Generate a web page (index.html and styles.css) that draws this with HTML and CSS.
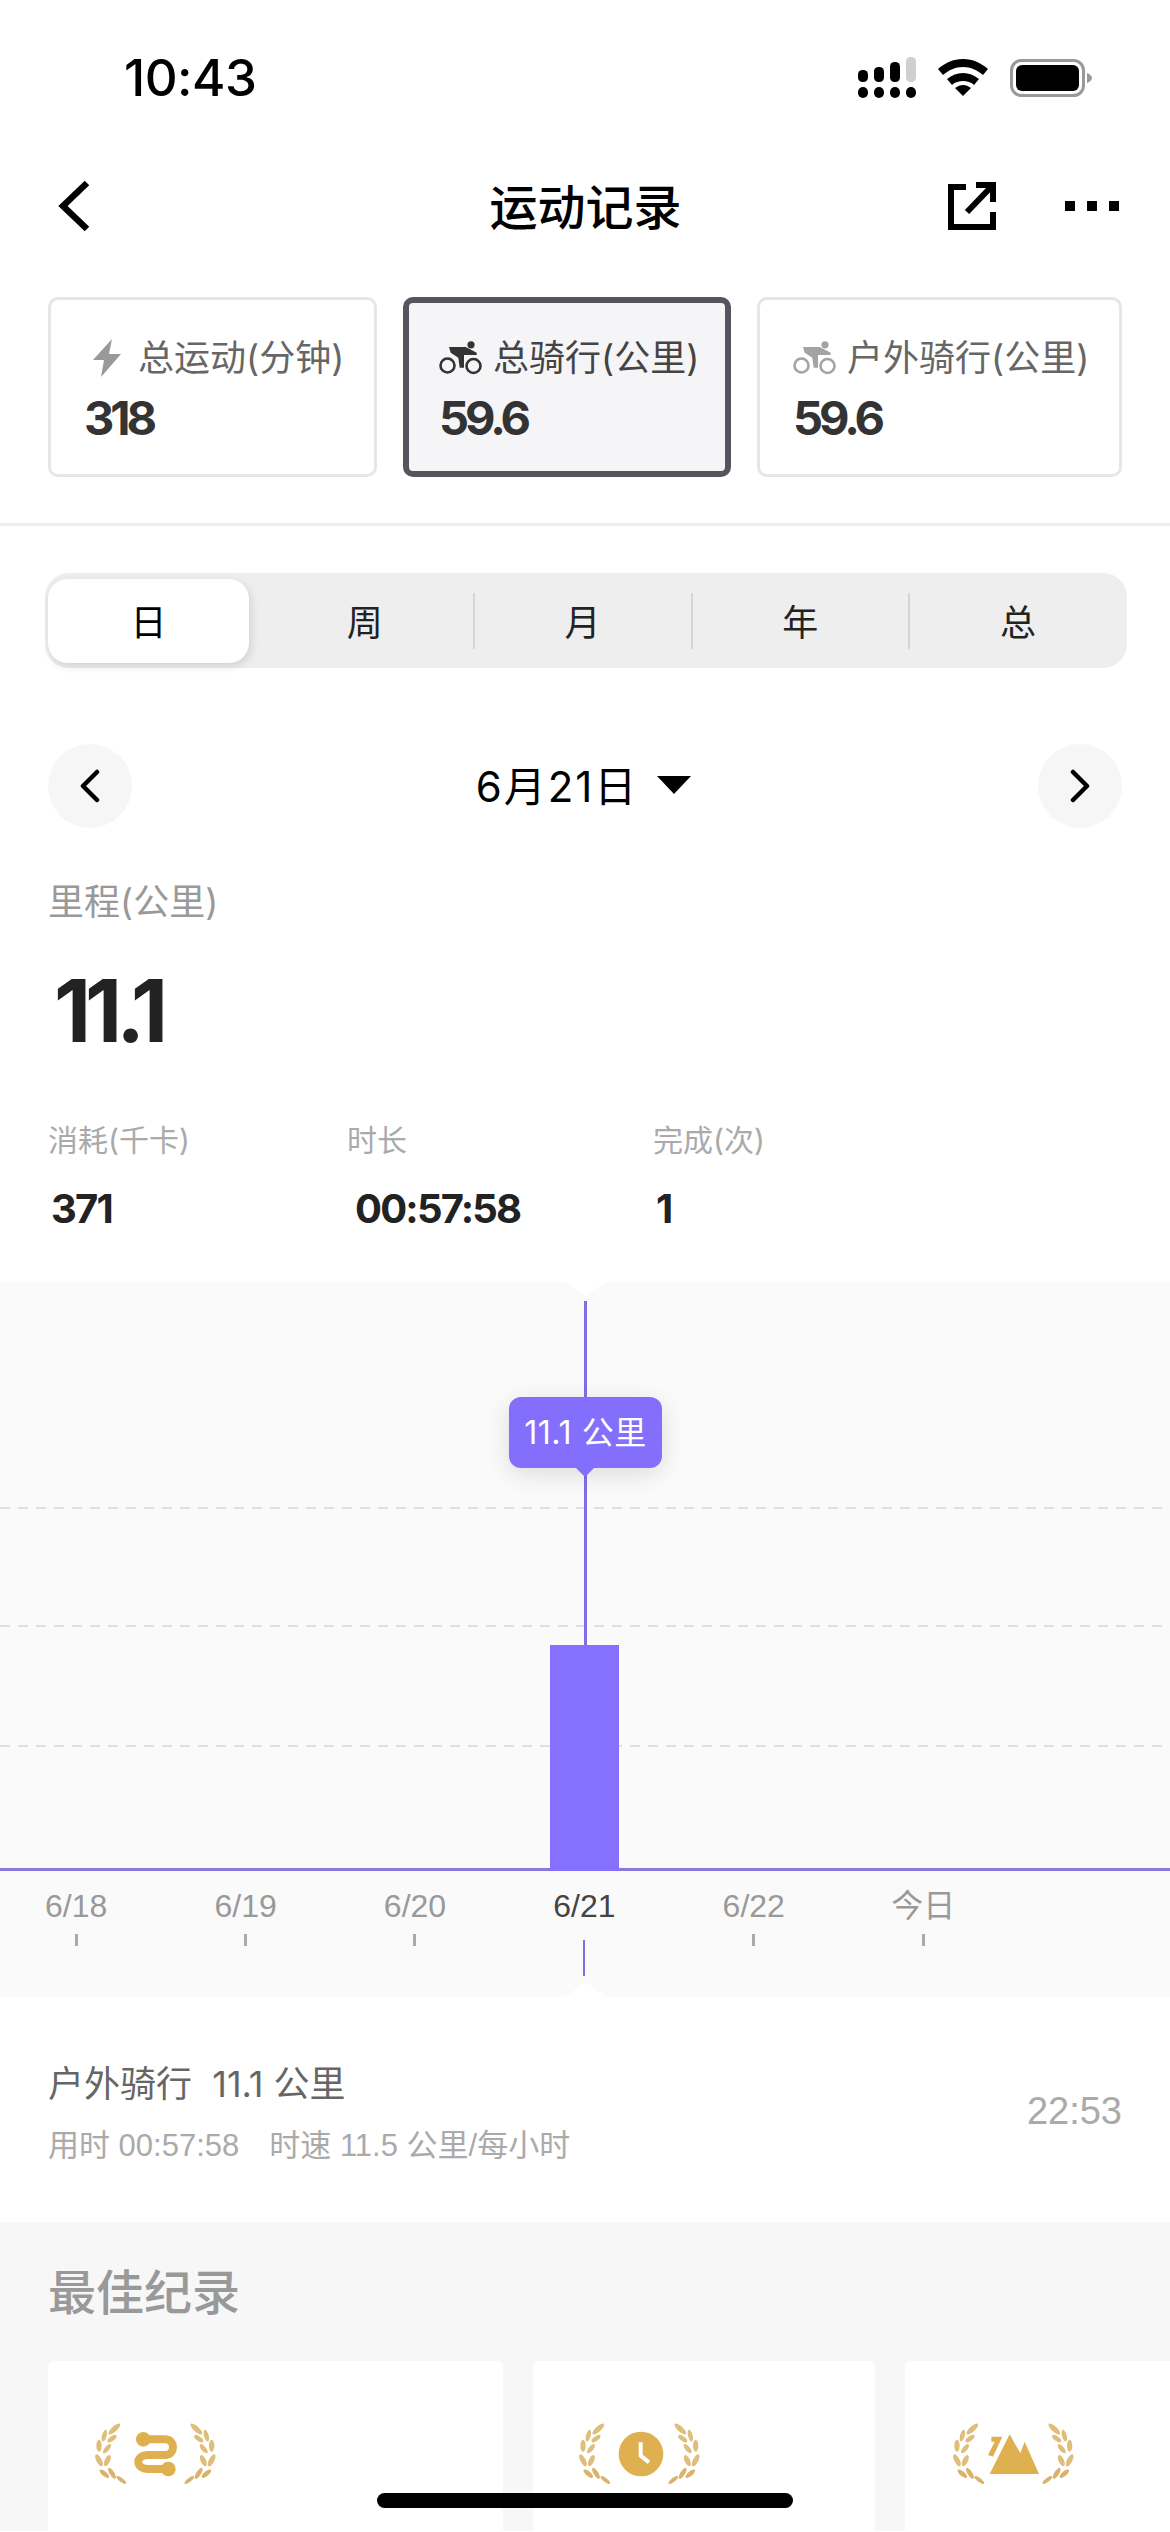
FILE: index.html
```html
<!DOCTYPE html>
<html lang="zh-CN">
  <head>
    <meta charset="UTF-8" />
    <meta name="viewport" content="width=device-width, initial-scale=1.0" />
    <title>运动记录</title>
    <link rel="stylesheet" href="styles.css">
  </head>
  <body>
    <svg class="defs" width="0" height="0" aria-hidden="true">
      <defs>
        <symbol id="bike" viewBox="0 0 44 34">
          <circle cx="8.5" cy="24.5" r="7" fill="none" stroke="currentColor" stroke-width="2.6" />
          <circle cx="34.5" cy="25" r="7" fill="none" stroke="currentColor" stroke-width="2.6" />
          <circle cx="32" cy="3.8" r="3.6" fill="currentColor" />
          <path d="M10 6 L26.7 6 L37.7 11.7 L37.7 14 L25 14 L25 26.7 L20.7 26.7 L19.3 16.7 L11.7 11.7 Z" fill="currentColor" />
        </symbol>
        <g id="branch" fill="#dfbe7c">
          <ellipse cx="88" cy="72" rx="23" ry="8" transform="rotate(-43 88 72)" />
          <ellipse cx="58" cy="92" rx="18" ry="7" transform="rotate(-75 58 92)" />
          <ellipse cx="81" cy="101" rx="16" ry="7" transform="rotate(-37 81 101)" />
          <ellipse cx="42" cy="122" rx="18" ry="8" transform="rotate(-90 42 122)" />
          <ellipse cx="66" cy="131" rx="17" ry="7" transform="rotate(-50 66 131)" />
          <ellipse cx="42" cy="166" rx="20" ry="8" transform="rotate(62 42 166)" />
          <ellipse cx="67" cy="167" rx="18" ry="8" transform="rotate(-65 67 167)" />
          <ellipse cx="58" cy="206" rx="18" ry="7" transform="rotate(40 58 206)" fill="#d9b26c" />
          <ellipse cx="81" cy="205" rx="19" ry="7" transform="rotate(58 81 205)" fill="#d9b26c" />
          <ellipse cx="109" cy="225" rx="18" ry="6" transform="rotate(37 109 225)" fill="#d9b26c" />
        </g>
        <symbol id="laurel" viewBox="0 0 420 270">
          <use href="#branch" />
          <use href="#branch" transform="matrix(-1 0 0 1 422 0)" />
        </symbol>
      </defs>
    </svg>

    <div class="screen">
      <header class="status-bar">
        <span class="clock">10:43</span>
        <div class="status-icons">
          <svg class="signal" width="58" height="41" viewBox="0 0 58 41">
            <rect x="0" y="13" width="10" height="12" rx="4.5" />
            <rect x="16" y="10" width="10" height="15" rx="4.5" />
            <rect x="32" y="5" width="10" height="20" rx="4.5" />
            <rect x="48" y="0" width="10" height="25" rx="4.5" fill="#cfcfcf" />
            <rect x="0" y="30" width="10" height="11" rx="5" />
            <rect x="16" y="30" width="10" height="11" rx="5" />
            <rect x="32" y="30" width="10" height="11" rx="5" />
            <rect x="48" y="30" width="10" height="11" rx="5" />
          </svg>
          <svg class="wifi" width="50" height="37" viewBox="0 0 50 37">
            <path d="M25 0 C15 0 7 4 0 10 L5 16 C11 11 17 8 25 8 C33 8 39 11 45 16 L50 10 C43 4 35 0 25 0 Z" />
            <path d="M25 14 C19 14 14 16 9 20 L14 26 C17 23 21 22 25 22 C29 22 33 23 36 26 L41 20 C36 16 31 14 25 14 Z" />
            <path d="M25 26 C22 26 20 27 17 29 L25 37 L33 29 C30 27 28 26 25 26 Z" />
          </svg>
          <svg class="battery" width="82" height="38" viewBox="0 0 82 38">
            <rect x="1.5" y="1.5" width="72" height="35" rx="10" fill="none" stroke="#999" stroke-width="3" />
            <rect x="6" y="6" width="63" height="26" rx="6" />
            <path d="M77 14 C80 15 82 17 82 19 C82 21 80 23 77 24 Z" fill="#999" />
          </svg>
        </div>
      </header>

      <nav class="nav-bar">
        <svg class="nav-back" width="34" height="52" viewBox="0 0 34 52">
          <path d="M30 3 L6 26 L30 49" fill="none" stroke="#000" stroke-width="6.5" />
        </svg>
        <h1 class="nav-title">运动记录</h1>
        <svg class="nav-share" width="48" height="48" viewBox="0 0 48 48">
          <path d="M18 5 H3 V45 H45 V30" fill="none" stroke="#000" stroke-width="6" />
          <path d="M28 3 H45 V20" fill="none" stroke="#000" stroke-width="6" />
          <path d="M45 3 L19 30" fill="none" stroke="#000" stroke-width="6" />
        </svg>
        <div class="nav-more"><i></i><i></i><i></i></div>
      </nav>

      <section class="totals">
        <div class="total-card total-sport">
          <div class="total-label">
            <svg class="bolt" width="30" height="38" viewBox="0 0 30 38">
              <path d="M20 0 L1 21 L12 21 L9 38 L29 15 L17 15 Z" fill="#999" />
            </svg>
            <span>总运动(分钟)</span>
          </div>
          <div class="total-value">318</div>
        </div>
        <div class="total-card total-ride is-active">
          <div class="total-label">
            <svg class="bike-icon" width="44" height="34"><use href="#bike" /></svg>
            <span>总骑行(公里)</span>
          </div>
          <div class="total-value">59.6</div>
        </div>
        <div class="total-card total-outdoor">
          <div class="total-label">
            <svg class="bike-icon is-muted" width="44" height="34"><use href="#bike" /></svg>
            <span>户外骑行(公里)</span>
          </div>
          <div class="total-value">59.6</div>
        </div>
      </section>

      <div class="segment">
        <div class="segment-item is-active">日</div>
        <div class="segment-item">周</div>
        <div class="segment-item has-line">月</div>
        <div class="segment-item has-line">年</div>
        <div class="segment-item has-line">总</div>
      </div>

      <div class="date-row">
        <div class="round-btn">
          <svg width="22" height="34" viewBox="0 0 22 34">
            <path d="M18 3 L4 17 L18 31" fill="none" stroke="#000" stroke-width="4.5" stroke-linecap="round" stroke-linejoin="round" />
          </svg>
        </div>
        <div class="date-picker">
          <span>6月21日</span>
          <i class="caret"></i>
        </div>
        <div class="round-btn">
          <svg width="22" height="34" viewBox="0 0 22 34">
            <path d="M4 3 L18 17 L4 31" fill="none" stroke="#000" stroke-width="4.5" stroke-linecap="round" stroke-linejoin="round" />
          </svg>
        </div>
      </div>

      <section class="summary">
        <div class="summary-label">里程(公里)</div>
        <div class="summary-value">11.1</div>
        <div class="stats">
          <div class="stat stat-kcal">
            <div class="stat-label">消耗(千卡)</div>
            <div class="stat-value">371</div>
          </div>
          <div class="stat stat-time">
            <div class="stat-label">时长</div>
            <div class="stat-value">00:57:58</div>
          </div>
          <div class="stat stat-done">
            <div class="stat-label">完成(次)</div>
            <div class="stat-value">1</div>
          </div>
        </div>
      </section>

      <section class="chart">
        <svg class="chart-lines" width="1170" height="589" viewBox="0 0 1170 589">
          <path d="M565 0 H605 L585 14 Z" fill="#fff" />
          <path class="grid-line" d="M0 226 H1170 M0 344 H1170 M0 464 H1170" />
          <path d="M585.5 19 V586" stroke="#7f6fe6" stroke-width="3" />
          <rect x="550" y="363" width="69" height="226" fill="#8570ff" />
          <path d="M0 587.5 H550 M619 587.5 H1170" stroke="#8a78dc" stroke-width="3" />
        </svg>
        <div class="tooltip">11.1 公里</div>
        <div class="axis">
          <div class="axis-item"><span>6/18</span><i></i></div>
          <div class="axis-item"><span>6/19</span><i></i></div>
          <div class="axis-item"><span>6/20</span><i></i></div>
          <div class="axis-item is-active"><span>6/21</span><i></i></div>
          <div class="axis-item"><span>6/22</span><i></i></div>
          <div class="axis-item"><span>今日</span><i></i></div>
        </div>
      </section>

      <section class="activity">
        <div>
          <div class="activity-title">户外骑行&nbsp;&nbsp;11.1 公里</div>
          <div class="activity-meta"><span>用时 00:57:58</span><span>时速 11.5 公里/每小时</span></div>
        </div>
        <div class="activity-time">22:53</div>
      </section>

      <section class="records">
        <h2 class="records-title">最佳纪录</h2>
        <div class="record-list">
          <div class="record-card record-distance">
            <svg class="medal" width="140" height="90" viewBox="0 0 420 270">
              <use href="#laurel" width="420" height="270" />
              <path d="M175 103 H240 C272 103 272 150 240 150 H190 C150 150 150 192 190 192 H250" fill="none" stroke="#deb04f" stroke-width="24" />
              <circle cx="175" cy="103" r="22" fill="#deb04f" />
              <circle cx="250" cy="192" r="22" fill="#deb04f" />
            </svg>
          </div>
          <div class="record-card record-time">
            <svg class="medal" width="140" height="90" viewBox="0 0 420 270">
              <use href="#laurel" width="420" height="270" />
              <circle cx="216" cy="147" r="67" fill="#deb04f" />
              <path d="M215 112 V152 L240 172" fill="none" stroke="#fff" stroke-width="12" />
            </svg>
          </div>
          <div class="record-card record-climb">
            <svg class="medal" width="140" height="90" viewBox="0 0 420 270">
              <use href="#laurel" width="420" height="270" />
              <path d="M140 207 L200 88 L232 145 L245 110 L288 207 Z" fill="#deb04f" />
              <path d="M145 95 H178 L150 155 L135 150 L155 110 H145 Z" fill="#deb04f" />
            </svg>
          </div>
        </div>
      </section>

      <div class="home-bar"></div>
    </div>
  </body>
</html>
```

FILE: styles.css
```css
* {
  box-sizing: border-box;
}

html,
body {
  margin: 0;
  padding: 0;
  background: #fff;
}

body {
  font-family: "Inter", "Noto Sans CJK SC", sans-serif;
  color: #000;
}

.defs {
  display: block;
  height: 0;
}

.screen {
  position: relative;
  width: 1170px;
  height: 2532px;
  overflow: hidden;
}

/* status bar */
.status-bar {
  display: flex;
  justify-content: space-between;
  align-items: center;
  height: 155px;
  padding: 0 78px 0 124px;
}

.clock {
  font-size: 51px;
  font-weight: 500;
  line-height: 1;
  letter-spacing: -0.5px;
}

.status-icons {
  display: flex;
  align-items: center;
  gap: 22px;
}

/* nav */
.nav-bar {
  position: relative;
  display: flex;
  align-items: center;
  height: 102px;
  padding: 0 51px 0 57px;
}

.nav-title {
  position: absolute;
  left: 0;
  right: 0;
  margin: 0;
  padding: 0 0 4px 1px;
  text-align: center;
  font-size: 48px;
  font-weight: 500;
}

.nav-share {
  margin-left: auto;
  z-index: 1;
}

.nav-more {
  display: flex;
  gap: 12px;
  margin-left: 69px;
  z-index: 1;
}

.nav-more i {
  display: block;
  width: 10px;
  height: 10px;
  background: #000;
}

/* totals */
.totals {
  display: flex;
  gap: 26px;
  height: 269px;
  padding: 40px 48px 0;
  border-bottom: 3px solid #eeeeee;
}

.total-card {
  height: 180px;
  padding: 37px 33px 0;
  border: 3px solid #e6e6e6;
  border-radius: 10px;
}

.total-sport {
  width: 329px;
}

.total-ride {
  width: 328px;
  padding-left: 30px;
}

.total-outdoor {
  width: 365px;
}

.total-card.is-active {
  border: 6px solid #55545f;
  background: #f5f5f8;
  padding-top: 34px;
}

.total-label {
  display: flex;
  align-items: center;
  gap: 10px;
  height: 42px;
  font-size: 36px;
  line-height: 42px;
  color: #666;
  white-space: nowrap;
}

.total-sport .total-label {
  gap: 16px;
  padding-left: 8px;
}

.is-active .total-label {
  color: #444;
}

.total-label svg {
  flex: none;
}

.bike-icon {
  color: #333;
}

.bike-icon.is-muted {
  color: #a3a3a3;
}

.total-value {
  margin-top: 10px;
  font-size: 47px;
  line-height: 58px;
  font-weight: 700;
  letter-spacing: -4px;
  color: #333;
}

/* day / week tabs */
.segment {
  display: flex;
  align-items: stretch;
  height: 95px;
  margin: 47px 43px 0 45px;
  padding: 6px 0 5px 3px;
  background: #eeeeee;
  border-radius: 24px;
}

.segment-item {
  position: relative;
  flex: 1;
  display: flex;
  align-items: center;
  justify-content: center;
  padding-bottom: 3px;
  font-size: 36px;
  color: #222;
}

.segment-item.is-active {
  flex: none;
  width: 201px;
  margin-right: 7px;
  background: #fff;
  border-radius: 20px;
  color: #000;
  box-shadow: 2px 3px 8px rgba(0, 0, 0, 0.12);
}

.segment-item.has-line::before {
  content: "";
  position: absolute;
  left: -1px;
  top: 14px;
  bottom: 14px;
  width: 2px;
  background: #d5d5d5;
}

/* date */
.date-row {
  display: flex;
  align-items: center;
  justify-content: space-between;
  margin: 76px 48px 0;
}

.round-btn {
  display: flex;
  align-items: center;
  justify-content: center;
  width: 84px;
  height: 84px;
  border-radius: 50%;
  background: #f6f6f6;
}

.date-picker {
  display: flex;
  align-items: center;
  gap: 19px;
  margin-left: -3px;
  padding-bottom: 5px;
  font-size: 42px;
  letter-spacing: 2px;
}

.caret {
  width: 0;
  height: 0;
  margin-top: 3px;
  border-left: 17px solid transparent;
  border-right: 17px solid transparent;
  border-top: 18px solid #000;
}

/* summary numbers */
.summary {
  padding: 47px 48px 0;
}

.summary-label {
  font-size: 36px;
  line-height: 54px;
  color: #999;
}

.summary-value {
  margin-top: 36px;
  padding-left: 6px;
  font-size: 86px;
  line-height: 92px;
  font-weight: 700;
  letter-spacing: -6px;
  color: #222;
}

.stats {
  display: flex;
  margin-top: 61px;
}

.stat-kcal {
  width: 299px;
}

.stat-time {
  width: 306px;
}

.stat-label {
  font-size: 30px;
  line-height: 44px;
  color: #aaa;
}

.stat-value {
  margin-top: 22px;
  padding-left: 3px;
  font-size: 40px;
  line-height: 50px;
  font-weight: 700;
  letter-spacing: -1.8px;
  color: #222;
}

.stat-time .stat-value {
  padding-left: 8px;
}

/* chart */
.chart {
  position: relative;
  height: 715px;
  margin-top: 48px;
  background: #fafafa;
}

.chart-lines {
  display: block;
}

.grid-line {
  fill: none;
  stroke: #e0e0e0;
  stroke-width: 2;
  stroke-dasharray: 10 8;
}

.tooltip {
  position: absolute;
  left: 509px;
  top: 115px;
  width: 153px;
  height: 71px;
  background: #836ffb;
  border-radius: 12px;
  color: #fff;
  font-size: 32px;
  line-height: 71px;
  letter-spacing: 0.6px;
  text-align: center;
  white-space: nowrap;
  box-shadow: 0 6px 24px rgba(0, 0, 0, 0.12);
}

.tooltip::after {
  content: "";
  position: absolute;
  left: 67px;
  bottom: -9px;
  width: 0;
  height: 0;
  border-left: 9px solid transparent;
  border-right: 9px solid transparent;
  border-top: 9px solid #836ffb;
}

.axis {
  display: grid;
  grid-template-columns: repeat(6, 169.4px);
  margin-left: -8.5px;
  padding-top: 18px;
}

.axis-item {
  display: flex;
  flex-direction: column;
  align-items: center;
  font-family: "Liberation Sans", "Noto Sans CJK SC", sans-serif;
  font-size: 32px;
  line-height: 34px;
  color: #999;
}

.axis-item i {
  display: block;
  width: 3px;
  height: 12px;
  margin-top: 11px;
  background: #aaa;
}

.axis-item.is-active {
  color: #444;
}

.axis-item.is-active i {
  width: 2px;
  height: 36px;
  margin-top: 17px;
  background: #7f6fe6;
}

.chart::after {
  content: "";
  position: absolute;
  left: 565px;
  bottom: 0;
  width: 0;
  height: 0;
  border-left: 21px solid transparent;
  border-right: 21px solid transparent;
  border-bottom: 15px solid #fff;
}

/* activity row */
.activity {
  display: flex;
  align-items: center;
  justify-content: space-between;
  height: 225px;
  padding: 4px 48px 0;
}

.activity-title {
  margin-top: 2px;
  font-size: 36px;
  line-height: 46px;
  color: #666;
  white-space: nowrap;
}

.activity-meta {
  display: flex;
  gap: 30px;
  margin-top: 20px;
  font-family: "Liberation Sans", "Noto Sans CJK SC", sans-serif;
  font-size: 31px;
  line-height: 38px;
  color: #aaa;
  white-space: nowrap;
}

.activity-time {
  font-family: "Liberation Sans", sans-serif;
  font-size: 38px;
  color: #aaa;
}

/* records */
.records {
  height: 309px;
  padding: 37px 0 0 48px;
  background: #f7f7f7;
}

.records-title {
  margin: 0;
  font-size: 48px;
  line-height: 68px;
  font-weight: 500;
  color: #999;
}

.record-list {
  display: flex;
  gap: 30px;
  margin-top: 34px;
}

.record-card {
  flex: none;
  height: 240px;
  padding-top: 44px;
  background: #fff;
  border-radius: 6px;
}

.record-distance {
  width: 455px;
  padding-left: 37px;
}

.record-time {
  width: 342px;
  padding-left: 36px;
}

.record-climb {
  width: 300px;
  padding-left: 38px;
}

.medal {
  display: block;
}

.home-bar {
  position: absolute;
  left: 377px;
  top: 2493px;
  width: 416px;
  height: 15px;
  background: #000;
  border-radius: 8px;
}
```
